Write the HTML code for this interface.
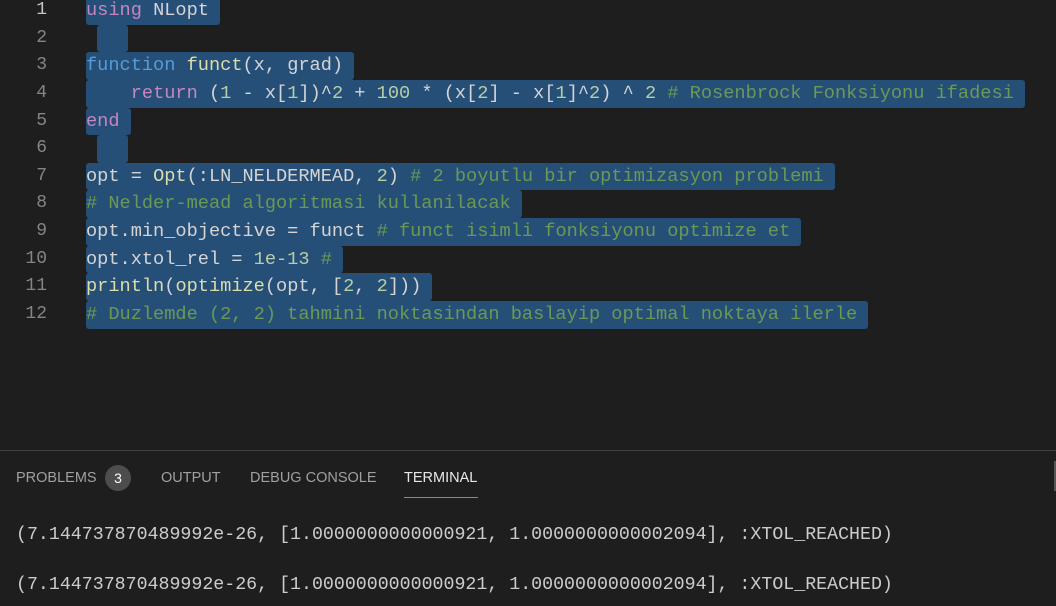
<!DOCTYPE html>
<html><head><meta charset="utf-8"><style>
body{margin:0;width:1056px;height:605px;background:#1e1e1e;overflow:hidden;position:relative;font-family:"Liberation Mono",monospace}
.ln{position:absolute;left:0;width:47px;text-align:right;color:#858585;font-size:18px;line-height:27.64px}
.c{position:absolute;left:86px;font-size:18.64px;line-height:27.64px;height:27.64px;white-space:pre;color:#d4d4d4}
.c span.s{display:inline-block;height:27.64px;background:#264f78;padding-right:11px;border-radius:3px}
.k{color:#c586c0}.b{color:#569cd6}.f{color:#dcdcaa}.n{color:#b5cea8}.m{color:#6a9955}
.e{position:absolute;left:97px;width:31px;height:27.64px;background:#264f78;border-radius:3px}
.panel{position:absolute;left:0;top:450px;width:1056px;height:155px;border-top:1px solid #414141;background:#1e1e1e;font-family:"Liberation Sans",sans-serif}
.tab{position:absolute;top:19px;font-size:14.5px;color:#a0a0a0}
.t{position:absolute;left:16px;font-size:18.27px;color:#cccccc;white-space:pre;font-family:"Liberation Mono",monospace}
</style></head><body>
<div class="ln" style="top:-3px;color:#c6c6c6">1</div>
<div class="ln" style="top:24.64px">2</div>
<div class="ln" style="top:52.28px">3</div>
<div class="ln" style="top:79.92px">4</div>
<div class="ln" style="top:107.56px">5</div>
<div class="ln" style="top:135.2px">6</div>
<div class="ln" style="top:162.84px">7</div>
<div class="ln" style="top:190.48px">8</div>
<div class="ln" style="top:218.12px">9</div>
<div class="ln" style="top:245.76px">10</div>
<div class="ln" style="top:273.4px">11</div>
<div class="ln" style="top:301.04px">12</div>

<div class="c" style="top:-3px"><span class="s"><span class="k">using</span> NLopt</span></div>
<div class="e" style="top:24.64px"></div>
<div class="c" style="top:52.28px"><span class="s"><span class="b">function</span> <span class="f">funct</span>(x, grad)</span></div>
<div class="c" style="top:79.92px"><span class="s">    <span class="k">return</span> (<span class="n">1</span> - x[<span class="n">1</span>])^<span class="n">2</span> + <span class="n">100</span> * (x[<span class="n">2</span>] - x[<span class="n">1</span>]^<span class="n">2</span>) ^ <span class="n">2</span> <span class="m"># Rosenbrock Fonksiyonu ifadesi</span></span></div>
<div class="c" style="top:107.56px"><span class="s"><span class="k">end</span></span></div>
<div class="e" style="top:135.2px"></div>
<div class="c" style="top:162.84px"><span class="s">opt = <span class="f">Opt</span>(:LN_NELDERMEAD, <span class="n">2</span>) <span class="m"># 2 boyutlu bir optimizasyon problemi</span></span></div>
<div class="c" style="top:190.48px"><span class="s"><span class="m"># Nelder-mead algoritmasi kullanilacak</span></span></div>
<div class="c" style="top:218.12px"><span class="s">opt.min_objective = funct <span class="m"># funct isimli fonksiyonu optimize et</span></span></div>
<div class="c" style="top:245.76px"><span class="s">opt.xtol_rel = <span class="n">1e-13</span> <span class="m">#</span></span></div>
<div class="c" style="top:273.4px"><span class="s"><span class="f">println</span>(<span class="f">optimize</span>(opt, [<span class="n">2</span>, <span class="n">2</span>]))</span></div>
<div class="c" style="top:301.04px"><span class="s"><span class="m"># Duzlemde (2, 2) tahmini noktasindan baslayip optimal noktaya ilerle</span></span></div>

<div class="panel">
<div class="tab" style="left:16px">PROBLEMS</div>
<div style="position:absolute;left:105px;top:14px;width:26px;height:26px;border-radius:13px;background:#4d4d4d;color:#fff;font-size:14px;text-align:center;line-height:26px">3</div>
<div class="tab" style="left:161px">OUTPUT</div>
<div class="tab" style="left:250px">DEBUG CONSOLE</div>
<div class="tab" style="left:404px;color:#e7e7e7">TERMINAL</div>
<div style="position:absolute;left:404px;top:46px;width:74px;height:1px;background:#8a8a8a"></div>
<div class="t" style="top:74px">(7.144737870489992e-26, [1.0000000000000921, 1.0000000000002094], :XTOL_REACHED)</div>
<div class="t" style="top:124px">(7.144737870489992e-26, [1.0000000000000921, 1.0000000000002094], :XTOL_REACHED)</div>
<div style="position:absolute;right:0;top:10px;width:2px;height:30px;background:#555"></div>
</div>
</body></html>
